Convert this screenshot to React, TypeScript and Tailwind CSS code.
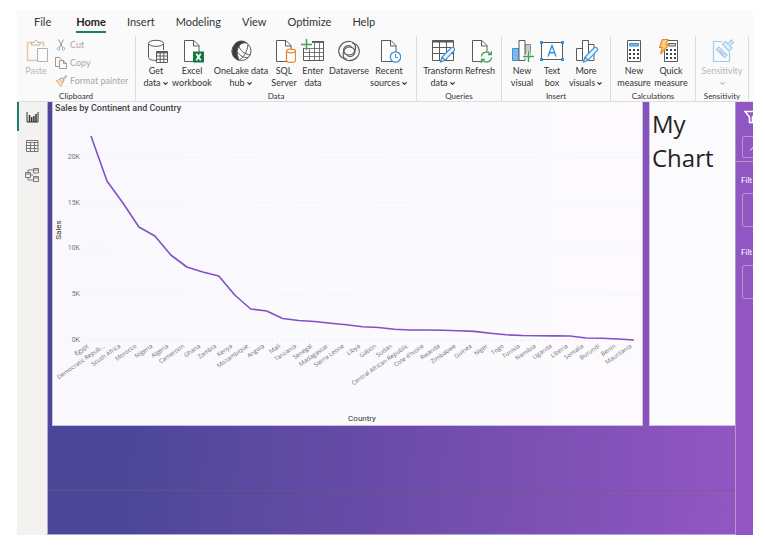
import type { ReactNode } from "react";
import { ChevronDown } from "lucide-react";

const DARK = "#5a5a5a";
const BLUE = "#3a92da";
const GREEN = "#3fa35a";
const ORANGE = "#e8892e";

function Icon({ children, faded = false }: { children: ReactNode; faded?: boolean }) {
  return (
    <svg
      viewBox="0 0 24 24"
      className={faded ? "h-6 w-6 shrink-0 opacity-45" : "h-6 w-6 shrink-0"}
      fill="none"
      stroke={DARK}
      strokeWidth="1"
      aria-hidden="true"
    >
      {children}
    </svg>
  );
}

const page = (
  <>
    <path d="M4.500 1.500h9.500l5 5v16h-14.500z" fill="#fff" />
    <path d="M13.500 1.500v5.500h5.500" />
  </>
);

const pencil = (
  <path
    d="M9.500 23l1.500-5L20 9c1-1 2.200-1 3 0 .8.8.7 2-.2 2.900L14 21.300zM11 18l3 3.300"
    fill="#e9f3fc"
    stroke={BLUE}
    strokeWidth="1.200"
  />
);

const icons = {
  paste: (
    <Icon faded>
      <path d="M8 3.500H3.500v18H13M16 3.500h3.500V8" stroke={ORANGE} strokeWidth="1.500" />
      <path d="M7.500 6V3.500h2.500c.3-2.700 3.300-2.700 3.600 0H16V6z" fill="#fff" />
      <path d="M13.500 9.500h10v13h-10z" fill="#fff" />
    </Icon>
  ),
  getData: (
    <Icon>
      <path d="M4.500 4.500v14c0 1.700 3.500 3 8 3M19.500 11V4.500" />
      <ellipse cx="12" cy="4.300" rx="7.500" ry="3" fill="#fff" />
      <path d="M12.500 12.500h11v11h-11z" fill="#fff" />
      <path d="M12.500 13.500h11" strokeWidth="1.800" />
      <path d="M12.500 17h11M12.500 20.300h11M16.200 13v10.500M19.800 13v10.500" />
    </Icon>
  ),
  excel: (
    <Icon>
      {page}
      <path d="M13 12.500h11v11H13z" fill="#107c41" stroke="none" />
      <path d="M16.300 14.800l4.400 6.400M20.700 14.800l-4.400 6.400" stroke="#fff" strokeWidth="1.700" />
    </Icon>
  ),
  oneLake: (
    <Icon>
      <circle cx="12.500" cy="12" r="9.500" fill="#fff" />
      <path d="M5 6.500C7 1.800 14 .5 17.500 4c-3.500-.7-6.500 1-8 4C8 11 7.500 14 9 18l1 3.200C3.500 20 1 12 5 6.500z" fill="#3c3c3c" />
      <path d="M10 7c1 4.500 5 8 11.500 9M10.500 21c3.500-2.500 7.500-7 8.500-15.500M8.500 13c2.500 4 6.500 6 10.500 5.500" />
    </Icon>
  ),
  sql: (
    <Icon>
      {page}
      <path d="M14.500 12v9.500c0 2.500 9 2.500 9 0V12" fill="#fff" stroke={ORANGE} strokeWidth="1.300" />
      <ellipse cx="19" cy="12" rx="4.500" ry="1.800" fill="#fff" stroke={ORANGE} strokeWidth="1.300" />
    </Icon>
  ),
  enter: (
    <Icon>
      <path d="M2.500 2.500h20v19h-20z" fill="#fff" />
      <path d="M11 3h12" strokeWidth="1.800" />
      <path d="M2.500 9.500h20M2.500 13.500h20M2.500 17.500h20M8.500 8v13.500M13.500 4v17.500M18.500 4v17.500" strokeWidth=".8" />
      <path d="M0 0h11v9H0z" fill="#fafafa" stroke="none" />
      <path d="M5.500 0v11M0 5.500h11" stroke={GREEN} strokeWidth="1.500" />
    </Icon>
  ),
  dataverse: (
    <Icon>
      <g strokeWidth="1.200">
        <path d="M14.500 8c-5-3.500-9 1-7.500 5 1.500 3.800 7.500 4 10 .5C20 9.500 18.500 3 13 2.500 5.500 2 .8 8.500 2 14c.8 4 4.500 6.300 8 6" />
        <path d="M10 16.500c5 3 9-1.500 7.500-5.500C16 7.200 10 7 7.500 10.500 4.800 14.500 6 21 11.500 21.500 19 22 23.500 15.500 22 10c-.8-3.500-3.500-5.500-7-6" />
      </g>
    </Icon>
  ),
  recent: (
    <Icon>
      {page}
      <circle cx="18.500" cy="18" r="5.200" fill="#fff" stroke={BLUE} strokeWidth="1.300" />
      <path d="M18.500 15v3.500H21" stroke={BLUE} />
    </Icon>
  ),
  transform: (
    <Icon>
      <path d="M1.500 1.500h21v20h-21z" fill="#fff" />
      <path d="M1.500 2.500h21" strokeWidth="2" />
      <path d="M1.500 8.500h21M1.500 14.500h21M8.500 3v18.500M15.500 3v18.500" />
      {pencil}
    </Icon>
  ),
  refresh: (
    <Icon>
      {page}
      <circle cx="18.500" cy="18" r="6" fill="#fafafa" stroke="none" />
      <path
        d="M13.500 17.500c.5-5 7-6 9.500-2M23.500 12v3.500H20M23.500 18.500c-.5 5-7 6-9.500 2M13.500 24v-3.500H17"
        stroke={GREEN}
        strokeWidth="1.300"
      />
    </Icon>
  ),
  newVisual: (
    <Icon>
      <path d="M2.500 9.500h6.500v12H2.500z" fill="#7db8e8" stroke={BLUE} />
      <path d="M15 5.500h5.500v13H15z" fill="#c8c8c8" stroke="#8a8a8a" />
      <path d="M9 1.500h6v20H9z" fill="#fff" />
      <path d="M18.500 12v11M13 17.500h11" stroke="#fafafa" strokeWidth="3.500" />
      <path d="M18.500 12v11M13 17.500h11" stroke={GREEN} strokeWidth="1.500" />
    </Icon>
  ),
  textBox: (
    <Icon>
      <path d="M1.500 3.500h21v17h-21z" fill="#fff" />
      <path d="M8 17.500l4-11 4 11M9.400 13.800h5.200" stroke={BLUE} strokeWidth="1.400" />
      <path d="M0 2h3v3H0zM21 2h3v3h-3zM0 19h3v3H0zM21 19h3v3h-3z" fill={BLUE} stroke="none" />
    </Icon>
  ),
  moreVisuals: (
    <Icon>
      <path d="M2.500 9.500h6v12h-6zM14.500 5.500h5.500v16h-5.500z" fill="#fff" />
      <path d="M8.500 1.500h6v20h-6z" fill="#fff" />
      {pencil}
    </Icon>
  ),
  newMeasure: (
    <Icon>
      <path d="M5.500 1.500h13v21h-13z" fill="#fff" />
      <path d="M7.500 4.500h9V7h-9z" fill="#7db8e8" stroke={BLUE} />
      <path d="M7 11h10M7 15h10M7 19h10" stroke="#444" strokeWidth="2" strokeDasharray="2 2" />
    </Icon>
  ),
  quickMeasure: (
    <Icon>
      <path d="M5.500 1.500h13v21h-13z" fill="#fff" />
      <path d="M9.500 4.500h7V7h-7z" fill="#d8d8d8" />
      <path d="M7 11h10M7 15h10M7 19h10" stroke="#444" strokeWidth="2" strokeDasharray="2 2" />
      <path d="M3.500 .5h5.500L7 5.500h3L1.500 15l1.800-6.500H.5z" fill="#ffcf85" stroke={ORANGE} strokeWidth="1.200" />
    </Icon>
  ),
  sensitivity: (
    <Icon faded>
      <g stroke={BLUE} strokeWidth="1.200">
        <path d="M12 2.500H3.500v20h16V13" />
        <path d="M12.500 5.500l3-3 2.500 2.500 3-4 2.500 2.500-4 3L22 9l-3 3z" fill="#cfe5f7" />
        <path d="M6.500 10.500l2.500-2.500 8 8-2.500 2.500zM9 11l5 5" fill="#cfe5f7" />
      </g>
    </Icon>
  ),
};

function Tool({ icon, lines, width, menu = false, faded = false }: { icon: ReactNode; lines: string[]; width: string; menu?: boolean; faded?: boolean }) {
  return (
    <button
      type="button"
      disabled={faded}
      className={`flex flex-col items-center text-[9px] leading-3 whitespace-nowrap ${width} ${faded ? "text-[#b8b8b8]" : "text-[#333]"}`}
    >
      <span className="mb-0.5 flex">{icon}</span>
      {lines.map((line, i) => (
        <span key={line} className="flex h-3 items-center gap-px">
          {line}
          {menu && i === lines.length - 1 && <ChevronDown size={7} strokeWidth={4} />}
        </span>
      ))}
    </button>
  );
}

function Group({ label, children, last = false }: { label: string; children: ReactNode; last?: boolean }) {
  return (
    <section className={`flex shrink-0 flex-col border-r border-[#dcdcdc] ${last ? "px-[3px]" : ""}`}>
      <div className="flex h-[53px] items-start pt-[3px]">{children}</div>
      <h2 className="mt-auto text-center text-[8px] leading-[10px] text-[#333]">{label}</h2>
    </section>
  );
}

function SmallTool({ label, children }: { label: string; children: ReactNode }) {
  return (
    <button type="button" disabled className="flex h-[18px] items-center gap-[3px] text-[9px] whitespace-nowrap text-[#a8a8a8]">
      <svg viewBox="0 0 12 12" className="h-3 w-3 opacity-60" fill="none" stroke={DARK} aria-hidden="true">
        {children}
      </svg>
      {label}
    </button>
  );
}

function Ribbon() {
  return (
    <div className="flex h-[65px]">
      <Group label="Clipboard">
        <Tool icon={icons.paste} lines={["Paste"]} width="w-[38px]" faded />
        <div className="-mt-[3px] flex w-20 flex-col items-start">
          <SmallTool label="Cut">
            <path d="M3.500 .5l4 8M8.500 .5l-4 8" />
            <path d="M4.500 8.500a1.500 1.500 0 1 0 0 2.500zM7.500 8.500a1.500 1.500 0 1 1 0 2.500z" stroke={BLUE} />
          </SmallTool>
          <SmallTool label="Copy">
            <path d="M4.500 9.500h-4v-9h4l2 2M4.500 3.500h4l3 3v5h-7zM8.500 3.500v3h3" />
          </SmallTool>
          <SmallTool label="Format painter">
            <path d="M1 6l4-2 3 3-2 4.500z" fill="#f6c58f" stroke={ORANGE} />
            <path d="M5 4l2-1 2 2-1 2M8 3.500L11 .5l.8.8L9 4.500" />
          </SmallTool>
        </div>
      </Group>
      <Group label="Data">
        <div className="flex pr-2 pl-1">
          <Tool icon={icons.getData} lines={["Get", "data"]} width="w-8" menu />
          <Tool icon={icons.excel} lines={["Excel", "workbook"]} width="w-10" />
          <Tool icon={icons.oneLake} lines={["OneLake data", "hub"]} width="w-[58px]" menu />
          <Tool icon={icons.sql} lines={["SQL", "Server"]} width="w-7" />
          <Tool icon={icons.enter} lines={["Enter", "data"]} width="w-[30px]" />
          <Tool icon={icons.dataverse} lines={["Dataverse"]} width="w-[42px]" />
          <Tool icon={icons.recent} lines={["Recent", "sources"]} width="w-[38px]" menu />
        </div>
      </Group>
      <Group label="Queries">
        <div className="flex px-[5px]">
          <Tool icon={icons.transform} lines={["Transform", "data"]} width="w-[42px]" menu />
          <Tool icon={icons.refresh} lines={["Refresh"]} width="w-8" />
        </div>
      </Group>
      <Group label="Insert">
        <div className="flex px-[6px]">
          <Tool icon={icons.newVisual} lines={["New", "visual"]} width="w-7" />
          <Tool icon={icons.textBox} lines={["Text", "box"]} width="w-8" />
          <Tool icon={icons.moreVisuals} lines={["More", "visuals"]} width="w-9" menu />
        </div>
      </Group>
      <Group label="Calculations">
        <div className="flex px-[5px]">
          <Tool icon={icons.newMeasure} lines={["New", "measure"]} width="w-9" />
          <Tool icon={icons.quickMeasure} lines={["Quick", "measure"]} width="w-[38px]" />
        </div>
      </Group>
      <Group label="Sensitivity" last>
        <Tool icon={icons.sensitivity} lines={["Sensitivity", ""]} width="w-[46px]" menu faded />
      </Group>
    </div>
  );
}

const tabs = ["File", "Home", "Insert", "Modeling", "View", "Optimize", "Help"];

/* Country name and the height of its point in the plot. */
const points: [string, number][] = [
  ["Egypt", 136], ["Democratic Repub...", 181], ["South Africa", 203], ["Morocco", 227], ["Nigeria", 236],
  ["Algeria", 255], ["Cameroon", 267], ["Ghana", 272], ["Zambia", 276], ["Kenya", 295], ["Mozambique", 309],
  ["Angola", 311], ["Mali", 318.5], ["Tanzania", 320.5], ["Senegal", 321.5], ["Madagascar", 323.2],
  ["Sierra Leone", 324.8], ["Libya", 326.8], ["Gabon", 327.5], ["Sudan", 329.2], ["Central African Republic", 330],
  ["Cote d'Ivoire", 330], ["Rwanda", 330.2], ["Zimbabwe", 330.8], ["Guinea", 331.4], ["Niger", 333.2],
  ["Togo", 334.8], ["Tunisia", 335.5], ["Namibia", 335.7], ["Uganda", 335.9], ["Liberia", 336],
  ["Somalia", 338], ["Burundi", 338.2], ["Benin", 339], ["Mauritania", 340],
];
const pointX = (i: number) => 91 + (i * 543) / 34;
const ticks: [string, number][] = [["20K", 157], ["15K", 203], ["10K", 248], ["5K", 294], ["0K", 340]];

function SalesChart() {
  return (
    <section className="min-w-0 flex-1 border-x border-b border-[#c9bfe4] bg-linear-to-r from-[#f9f9fd] to-[#fcfafd]">
      <h2 className="h-[13px] pl-[2px] font-['Roboto',sans-serif] text-[9px] leading-[13px] font-medium text-[#444]">
        Sales by Continent and Country
      </h2>
      <svg viewBox="53 115 589 310" className="block w-full" fontFamily="'Open Sans', 'Noto Sans', sans-serif">
        {ticks.map(([label, y]) => (
          <g key={label}>
            <line x1="84" x2="637" y1={y} y2={y} stroke="#e2e2e8" strokeWidth="1" strokeDasharray="1 3" />
            <text x="80" y={y + 2} textAnchor="end" fontSize="7" fontFamily="Roboto, sans-serif" fill="#777">{label}</text>
          </g>
        ))}
        <polyline
          points={points.map(([, y], i) => `${pointX(i)},${y}`).join(" ")}
          fill="none"
          stroke="#8250c4"
          strokeWidth="1.600"
          strokeLinejoin="round"
        />
        {points.map(([name], i) => (
          <text key={name} textAnchor="end" fontSize="6" fill="#6e6e6e" transform={`translate(${pointX(i) - 2} 347) rotate(-35)`}>
            {name}
          </text>
        ))}
        <g fontFamily="Roboto, sans-serif" fontSize="8" fill="#333" textAnchor="middle">
          <text transform="translate(61 230) rotate(-90)">Sales</text>
          <text x="362" y="421">Country</text>
        </g>
      </svg>
    </section>
  );
}

function ViewSwitcher() {
  return (
    <nav className="flex w-[30px] shrink-0 flex-col bg-[#f3f2f1]">
      <button type="button" aria-label="Report view" className="flex h-[29px] items-center justify-center border-l-2 border-[#1a7f6c] pr-[2px]">
        <svg viewBox="0 0 14 14" className="h-3.5 w-3.5" fill="none" stroke="#333" aria-hidden="true">
          <path d="M2 2v10h11V2" />
          <path d="M4.500 5v7M6.700 7v5M8.900 6v6M11 4v8" strokeWidth="1.500" />
        </svg>
      </button>
      <button type="button" aria-label="Table view" className="flex h-[29px] items-center justify-center">
        <svg viewBox="0 0 14 14" className="h-3.5 w-3.5" fill="none" stroke="#777" aria-hidden="true">
          <path d="M1.500 1.500h11.500v11H1.500zM1.500 3.500h11.500M1.500 6.500h11.500M1.500 9.500h11.500M5.500 3v9.500M9.500 3v9.500" />
        </svg>
      </button>
      <button type="button" aria-label="Model view" className="flex h-[30px] items-center justify-center">
        <svg viewBox="0 0 14 14" className="h-3.5 w-3.5" fill="none" stroke="#777" aria-hidden="true">
          <path d="M.5 4.500h5v5h-5zM8.500 .5h5v4.500h-5zM8.500 8.500h5v5h-5zM.5 6h5M8.500 2h5M8.500 10h5M3 4.500V2h5.500M3 9.500V12h5.500M5.500 7H8" />
        </svg>
      </button>
    </nav>
  );
}

function FiltersPane() {
  return (
    <aside className="w-[18px] shrink-0 overflow-hidden border-l border-[#b497d0] bg-[#9256c2] font-['Lato','Open_Sans',sans-serif] text-[8px] text-white">
      <div className="flex h-[60px] flex-col border-b border-[#b497d0] pl-[6px]">
        <svg viewBox="0 0 14 14" className="mt-2 ml-[2px] h-3.5 w-3.5 shrink-0" fill="none" stroke="#fff" strokeWidth="1.600" aria-hidden="true">
          <path d="M1 1.500h12L8.500 7v5.500h-3V7z" />
        </svg>
        <label className="mt-3 flex h-[22px] w-16 shrink-0 items-center rounded-xs border border-[#b497d0] pl-[7px]">
          <svg viewBox="0 0 10 10" className="h-2.5 w-2.5 shrink-0" fill="none" stroke="#fff" aria-hidden="true">
            <path d="M0 8.500L3.500 5" />
            <circle cx="6.500" cy="3" r="3" />
          </svg>
          <input aria-label="Search" className="w-10 bg-transparent outline-none" />
        </label>
      </div>
      <div className="flex flex-col pt-3 pl-[5px]">
        <h3 className="leading-3">Filt</h3>
        <div className="mt-[7px] ml-px h-[34px] w-16 rounded-xs border border-[#b497d0]" />
        <h3 className="mt-[19px] leading-3">Filt</h3>
        <div className="mt-[7px] ml-px h-[34px] w-16 rounded-xs border border-[#b497d0]" />
      </div>
    </aside>
  );
}

export default function App() {
  return (
    <div className="min-h-screen bg-white pt-[10px] pr-3 pb-[22px] pl-[17px] font-['Open_Sans','Noto_Sans',sans-serif]">
      <header className="overflow-hidden border-b border-[#dedede] bg-[#fafafa] font-['Lato','Open_Sans',sans-serif]">
        <nav className="flex h-[26px] gap-[21px] pl-[17px] text-[11px] text-[#333]">
          {tabs.map((tab) => (
            <a
              key={tab}
              href="#"
              className={tab === "Home" ? "ml-1 h-[23px] border-b-2 border-[#1a7f6c] leading-[23px] font-bold text-[#222]" : "h-[23px] leading-[23px]"}
            >
              {tab}
            </a>
          ))}
        </nav>
        <Ribbon />
      </header>
      <main className="flex">
        <ViewSwitcher />
        <div className="flex min-w-0 flex-1 flex-col border-b border-l border-[#b5a8d8] bg-linear-[93deg,#4c4799_0%,#4c4799_14%,#6a4ca8_50%,#9256c2_99%]">
          <div className="flex gap-[6px] pl-1">
            <SalesChart />
            <section className="w-[86px] shrink-0 border-b border-l border-[#c9bfe4] bg-[#fbfbfd] pt-[5px] pl-[2px]">
              <h1 className="text-[24px] leading-[34px] text-[#252423]">
                My
                <br />
                Chart
              </h1>
            </section>
          </div>
          <div className="h-[65px] border-b border-dotted border-[#666361]" />
          <div className="h-[43px]" />
        </div>
        <FiltersPane />
      </main>
    </div>
  );
}
